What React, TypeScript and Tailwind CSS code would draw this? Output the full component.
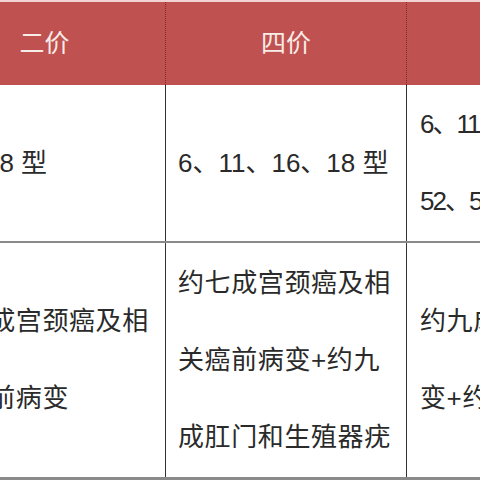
import React from "react";

const font = { fontFamily: '"Liberation Sans", "Noto Sans CJK SC", sans-serif' };

export default function App() {
  return (
    <div className="w-[480px] h-[480px] overflow-hidden bg-white text-[#2a2a2a]" style={font}>
      <div className="h-[2px] bg-[#f2d2d2]" />
      <div className="flex ml-[-76px] h-[83px] bg-[#c05151] text-[#f8ece6] text-[25px]">
        <div className="w-[242px] shrink-0 flex items-center justify-center border-r border-dotted border-[#7a2a2a]">二价</div>
        <div className="w-[241px] shrink-0 flex items-center justify-center border-r border-dotted border-[#7a2a2a]">四价</div>
        <div className="w-[241px] shrink-0 flex items-center justify-center">九价</div>
      </div>
      <div className="flex ml-[-76px] h-[156px] text-[26px] leading-[77px]">
        <div className="w-[242px] shrink-0 flex items-center pl-[6px] border-r border-[#333] whitespace-nowrap">16、18 型</div>
        <div className="w-[241px] shrink-0 flex items-center pl-[12px] border-r border-[#333] whitespace-nowrap">6、11、16、18 型</div>
        <div className="w-[241px] shrink-0 flex flex-col justify-center pl-[13px] whitespace-nowrap tracking-[-2px]">
          <div>6、11、16、18、31、33、45、</div>
          <div>52、58 型</div>
        </div>
      </div>
      <div className="h-[2px] bg-[#8a8a8a]" />
      <div className="flex ml-[-76px] h-[234px] text-[26px] leading-[77px] tracking-[0.6px]">
        <div className="w-[242px] shrink-0 flex flex-col justify-center pl-[12px] border-r border-[#333] whitespace-nowrap">
          <div>约七成宫颈癌及相</div>
          <div>关癌前病变</div>
        </div>
        <div className="w-[241px] shrink-0 flex flex-col justify-center pl-[12px] border-r border-[#333] whitespace-nowrap">
          <div>约七成宫颈癌及相</div>
          <div>关癌前病变+约九</div>
          <div>成肛门和生殖器疣</div>
        </div>
        <div className="w-[241px] shrink-0 flex flex-col justify-center pl-[13px] whitespace-nowrap">
          <div>约九成宫颈癌及相关癌前病</div>
          <div>变+约九成肛门和生殖器疣</div>
        </div>
      </div>
      <div className="h-[3px] bg-[#8a8a8a]" />
    </div>
  );
}
